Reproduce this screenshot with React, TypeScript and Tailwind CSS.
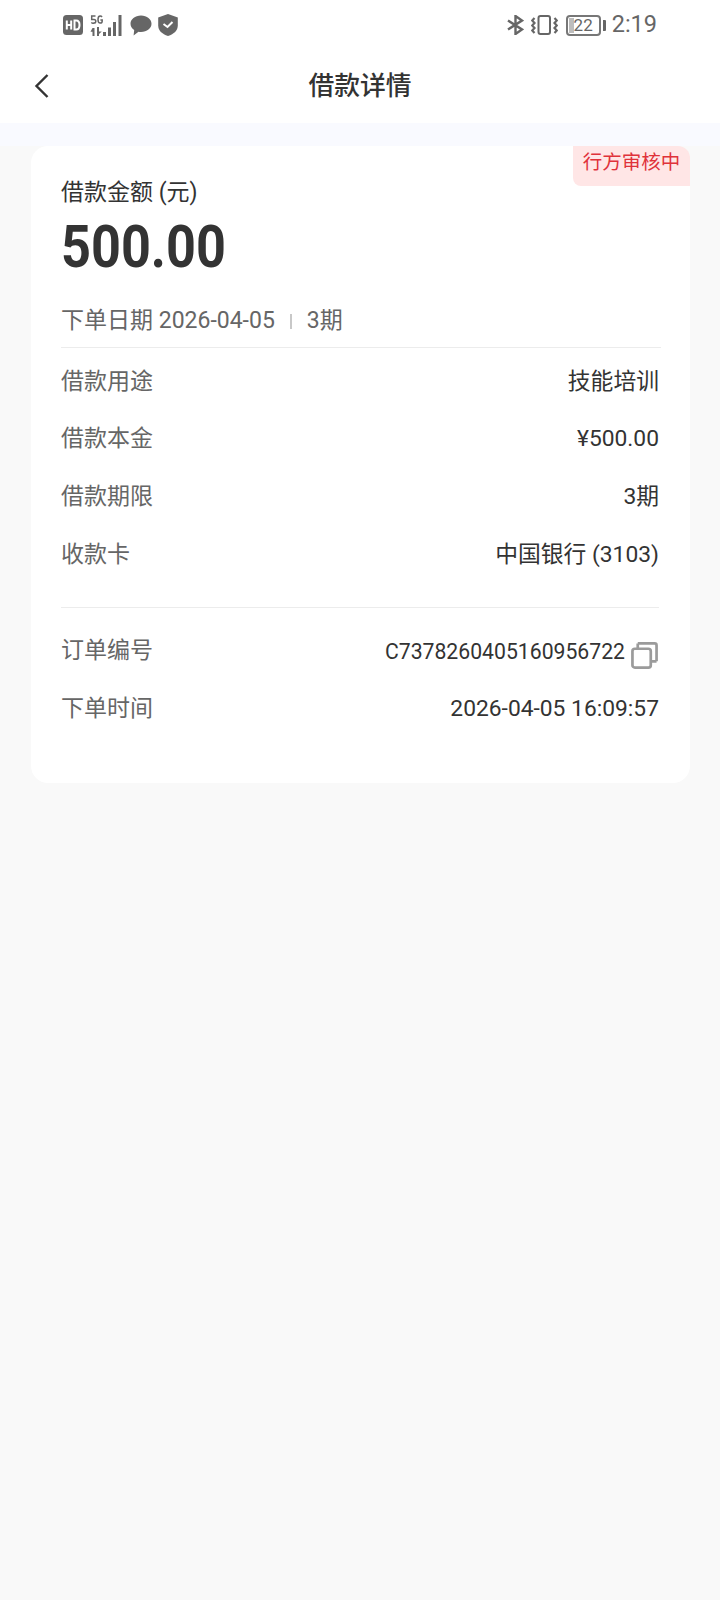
const cjk = "font-['Roboto','Noto_Sans_CJK_SC',sans-serif]";

function Row({ label, value }: { label: string; value: React.ReactNode }) {
  return (
    <div className="flex items-center justify-between h-[57.7px]">
      <span className="text-[#666666] text-[23px]">{label}</span>
      <span className="text-[#333333] text-[22.8px]">{value}</span>
    </div>
  );
}

function LeftStatus() {
  return (
    <div className="flex items-center gap-[7px]">
      <svg width="20" height="20" viewBox="0 0 20 20">
        <rect width="20" height="20" rx="3.5" fill="#666" />
        <path d="M3.8 5.500v9M3.800 10h4.400M8.200 5.500v9" stroke="#fff" strokeWidth="2" fill="none" />
        <path d="M11.500 5.500v9h1.700c2.400 0 3.300-1.800 3.300-4.500s-.9-4.500-3.300-4.500z" stroke="#fff" strokeWidth="2" fill="none" />
      </svg>
      <svg width="33" height="21" viewBox="0 0 33 21">
        <g fill="none" stroke="#666" strokeWidth="1.500">
          <path d="M5.500 1H1.700v3.400H4a1.800 1.800 0 010 3.600 2 2 0 01-2.600-.6" />
          <path d="M12 2C11.500 1.200 11 1 10.200 1 8.700 1 8 2.200 8 4.500s.7 3.600 2.200 3.600 2-.8 2-2.200V5h-1.800" />
        </g>
        <g fill="#666">
          <path d="M2.500 13h2v8h-2zM.5 16.800 2.500 13v3.800zM7 12h2v9H7zM9 16.500h2.800L9 19z" />
          <rect x="13" y="17" width="3" height="4" />
          <rect x="18" y="12.500" width="3" height="8.500" />
          <rect x="23" y="7" width="3" height="14" />
          <rect x="28.500" y="0" width="3" height="21" />
        </g>
      </svg>
      <svg width="22" height="21" viewBox="0 0 22 21">
        <path d="M11 0.500C17 0.500 21.500 4.200 21.500 8.800S17 17 11 17c-1 0-1.700-.1-2.500-.3L3.600 20.500l.6-5.500C1.800 13.500.5 11.300.5 8.800.5 4.200 5 .5 11 .5z" fill="#666" />
      </svg>
      <svg width="20" height="22" viewBox="0 0 20 22" className="-ml-[1px]">
        <path d="M10 0 19.800 3.500v8C19.800 16.500 16 20 10 22 4 20 .2 16.500 .2 11.500v-8z" fill="#666" />
        <path d="M5.500 10 9.500 13 14.500 8" fill="none" stroke="#fff" strokeWidth="2" />
      </svg>
    </div>
  );
}

function RightStatus() {
  return (
    <div className="flex items-center">
      <svg width="17" height="20" viewBox="0 0 17 20" className="mr-[7px]">
        <path d="M1 5.500 15 14.500 8.500 19V1L15 5.500 1 14.500" fill="none" stroke="#666" strokeWidth="2.400" />
      </svg>
      <svg width="27" height="20" viewBox="0 0 27 20" className="mr-[8px]">
        <rect x="7.500" y="1" width="11.500" height="18" rx="2" fill="none" stroke="#666" strokeWidth="2" />
        <path d="M3.500 3 1.200 5.500 3.500 8 1.200 10.500 3.500 13 1.200 15.500 3.500 18M23.500 3 25.800 5.500 23.500 8 25.800 10.500 23.500 13 25.800 15.500 23.500 18" fill="none" stroke="#666" strokeWidth="2.200" />
      </svg>
      <div className="relative w-[35px] h-[21px] border-2 border-[#777] rounded-[4px] bg-white">
        <div className="absolute left-[1px] top-[1px] bottom-[1px] w-[5px] bg-[#bdbdbd]" />
        <span className="absolute inset-0 flex items-center justify-center text-[17px] leading-none text-[#666]">22</span>
      </div>
      <div className="w-[3px] h-[11px] bg-[#666] rounded-r-[1px] ml-[2px] mr-[6px]" />
      <span className="text-[23.5px] leading-none text-[#666666]">2:19</span>
    </div>
  );
}

export default function App() {
  return (
    <div className={`w-[720px] h-[1600px] bg-[#f9f9f9] flex flex-col ${cjk}`}>
      <div className="bg-white h-[123px] flex flex-col">
        <div className="h-[50px] pl-[63px] pr-[63px] flex items-center justify-between">
          <LeftStatus />
          <RightStatus />
        </div>
        <div className="relative flex-1 flex items-center justify-center">
          <svg width="18" height="28" viewBox="0 0 18 28" className="absolute left-[33px] top-[22px]">
            <path d="M14.500 3 3.500 14l11 11" fill="none" stroke="#333" strokeWidth="2.400" />
          </svg>
          <span className="text-[25.8px] font-medium text-[#333333] leading-none">借款详情</span>
        </div>
      </div>
      <div className="h-[23px] bg-[#f9faff]" />
      <div className="relative ml-[31px] mr-[30px] h-[637px] bg-white rounded-[17px] pl-[30px] pr-[31px] pt-[34px] text-[23px]">
        <div className="absolute right-0 top-0 w-[117px] h-[40px] bg-[#ffe6e6] rounded-tr-[12px] rounded-bl-[8px] flex items-start justify-center text-[#e0323a] text-[19.500px] leading-none pt-[7px]">
          行方审核中
        </div>
        <div className="text-[#333333] leading-[26px]">借款金额 (元)</div>
        <div className="text-[60px] font-bold text-[#333333] leading-[64px] mt-[9px] origin-left scale-x-[0.87]">500.00</div>
        <div className="flex items-center mt-[28px] text-[#666666] leading-[28px]">
          <span>下单日期 2026-04-05</span>
          <span className="w-[2px] h-[15px] bg-[#c8c8c8] mx-[15px]" />
          <span>3期</span>
        </div>
        <div className="h-px bg-[#ececec] mt-[12px] -mr-[2px]" />
        <div className="pt-[5px]">
          <Row label="借款用途" value="技能培训" />
          <Row label="借款本金" value="¥500.00" />
          <Row label="借款期限" value="3期" />
          <Row label="收款卡" value="中国银行 (3103)" />
        </div>
        <div className="h-px bg-[#ececec] mt-[23px]" />
        <div className="pt-[15px]">
          <Row
            label="订单编号"
            value={
              <span className="flex items-center text-[21.2px] mr-[1px]">
                C7378260405160956722
                <svg width="27" height="27" viewBox="0 0 28 28" className="ml-[6px] mt-[4px] -mb-[4px]">
                  <rect x="1.500" y="7" width="19" height="19.500" rx="2.500" fill="none" stroke="#9b9b9b" strokeWidth="2.800" />
                  <path d="M7 1.500h17.500a2 2 0 012 2V20" fill="none" stroke="#9b9b9b" strokeWidth="2.800" />
                  <path d="M7 1.500V7M26.500 20H21" fill="none" stroke="#9b9b9b" strokeWidth="2.800" />
                </svg>
              </span>
            }
          />
          <Row label="下单时间" value="2026-04-05 16:09:57" />
        </div>
      </div>
    </div>
  );
}
